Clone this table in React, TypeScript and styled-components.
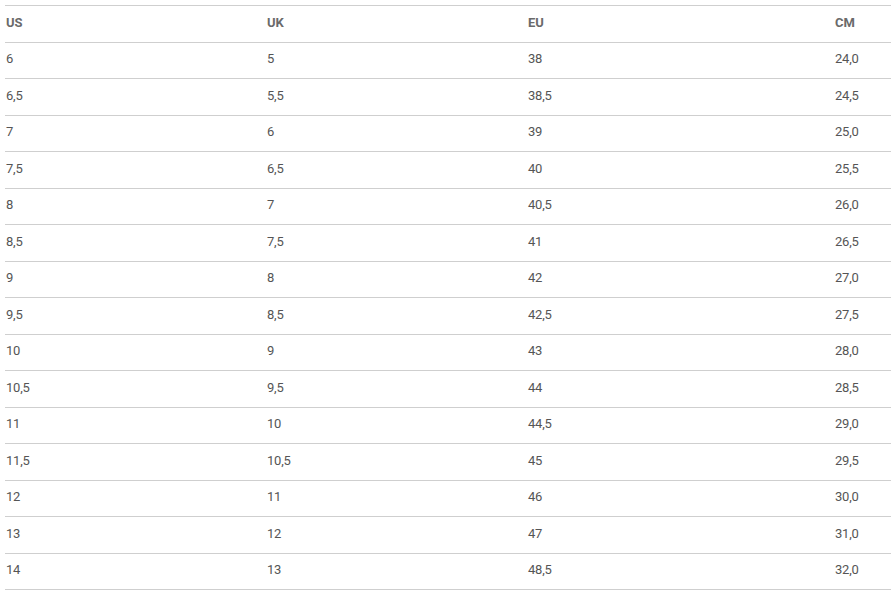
import styled, { createGlobalStyle } from 'styled-components';

const GlobalStyle = createGlobalStyle`
    body {
        margin: 0;
        background: #fff;
        font-family: Roboto, "Liberation Sans", sans-serif;
    }
`;

const rows: string[][] = [
    ['6', '5', '38', '24,0'],
    ['6,5', '5,5', '38,5', '24,5'],
    ['7', '6', '39', '25,0'],
    ['7,5', '6,5', '40', '25,5'],
    ['8', '7', '40,5', '26,0'],
    ['8,5', '7,5', '41', '26,5'],
    ['9', '8', '42', '27,0'],
    ['9,5', '8,5', '42,5', '27,5'],
    ['10', '9', '43', '28,0'],
    ['10,5', '9,5', '44', '28,5'],
    ['11', '10', '44,5', '29,0'],
    ['11,5', '10,5', '45', '29,5'],
    ['12', '11', '46', '30,0'],
    ['13', '12', '47', '31,0'],
    ['14', '13', '48,5', '32,0'],
];

const headers = ['US', 'UK', 'EU', 'CM'];

const App = () => {
    return (
        <>
            <GlobalStyle />
            <Wrapper>
                <Row>
                    {headers.map((h) => (
                        <Cell key={h} $header>{h}</Cell>
                    ))}
                </Row>
                {rows.map((r) => (
                    <Row key={r[0]}>
                        {r.map((v, i) => (
                            <Cell key={i}>{v}</Cell>
                        ))}
                    </Row>
                ))}
            </Wrapper>
        </>
    );
};

const Wrapper = styled.div`
    margin: 5px 1px 0 5px;
    border-top: 1px solid #cfcfcf;
`;

const Row = styled.div`
    display: grid;
    grid-template-columns: 261px 261px 307px 1fr;
    height: 35.5px;
    align-items: center;
    border-bottom: 1px solid #cfcfcf;
    padding-left: 1px;
`;

const Cell = styled.div<{ $header?: boolean }>`
    font-size: 13px;
    margin-top: -3px;
    color: ${(p) => (p.$header ? '#6a6a6a' : '#555')};
    font-weight: ${(p) => (p.$header ? 700 : 400)};
    letter-spacing: ${(p) => (p.$header ? '0' : '-0.2px')};
`;

export default App;
